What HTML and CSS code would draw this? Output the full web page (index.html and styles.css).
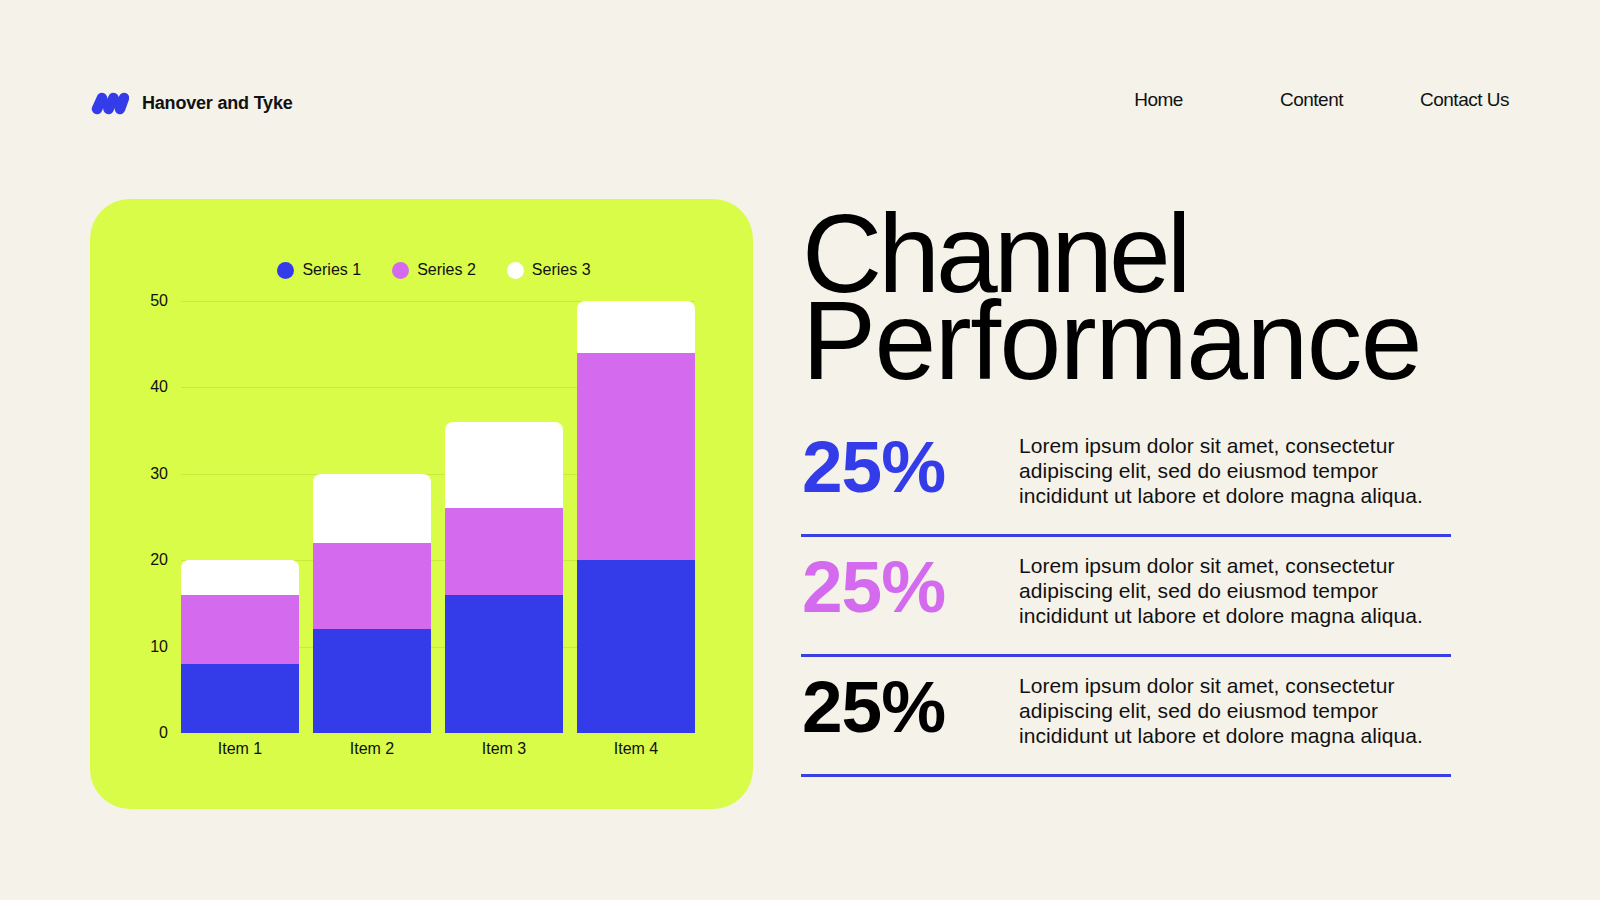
FILE: index.html
```html
<!DOCTYPE html>
<html lang="en">
<head>
<meta charset="utf-8">
<title>Channel Performance</title>
<link rel="stylesheet" href="styles.css">
</head>
<body>
<div class="page">
  <header class="topbar">
    <div class="brand">
      <svg class="brand-mark" viewBox="0 0 38 23" aria-hidden="true">
        <path d="M6 17 L11 6 M17.5 17 L22.5 6 M29 17 L33 6" stroke="#343be9" stroke-width="10.5" stroke-linecap="round" fill="none"/>
      </svg>
      <span class="brand-name">Hanover and Tyke</span>
    </div>
    <nav class="nav">
      <a href="#">Home</a>
      <a href="#">Content</a>
      <a href="#">Contact Us</a>
    </nav>
  </header>

  <main class="main">
    <section class="chart-card">
      <div class="legend">
        <div class="legend-item"><span class="dot dot-s1"></span>Series 1</div>
        <div class="legend-item"><span class="dot dot-s2"></span>Series 2</div>
        <div class="legend-item"><span class="dot dot-s3"></span>Series 3</div>
      </div>
      <div class="chart">
        <div class="yaxis">
          <div class="ytick">50</div>
          <div class="ytick">40</div>
          <div class="ytick">30</div>
          <div class="ytick">20</div>
          <div class="ytick">10</div>
          <div class="ytick">0</div>
        </div>
        <div class="plot">
          <div class="bar" style="height:172.8px">
            <div class="seg seg-s3" style="flex:4"></div>
            <div class="seg seg-s2" style="flex:8"></div>
            <div class="seg seg-s1" style="flex:8"></div>
          </div>
          <div class="bar" style="height:259.2px">
            <div class="seg seg-s3" style="flex:8"></div>
            <div class="seg seg-s2" style="flex:10"></div>
            <div class="seg seg-s1" style="flex:12"></div>
          </div>
          <div class="bar" style="height:311px">
            <div class="seg seg-s3" style="flex:10"></div>
            <div class="seg seg-s2" style="flex:10"></div>
            <div class="seg seg-s1" style="flex:16"></div>
          </div>
          <div class="bar" style="height:432px">
            <div class="seg seg-s3" style="flex:6"></div>
            <div class="seg seg-s2" style="flex:24"></div>
            <div class="seg seg-s1" style="flex:20"></div>
          </div>
        </div>
        <div class="axis-corner"></div>
        <div class="xaxis">
          <div class="xlabel">Item 1</div>
          <div class="xlabel">Item 2</div>
          <div class="xlabel">Item 3</div>
          <div class="xlabel">Item 4</div>
        </div>
      </div>
    </section>

    <section class="summary">
      <h1 class="title"><span class="title-line title-line-1">Channel</span><span class="title-line title-line-2">Performance</span></h1>
      <div class="stats">
        <div class="stat">
          <div class="stat-value value-blue">25%</div>
          <p class="stat-text">Lorem ipsum dolor sit amet, consectetur<br>adipiscing elit, sed do eiusmod tempor<br>incididunt ut labore et dolore magna aliqua.</p>
        </div>
        <div class="stat">
          <div class="stat-value value-pink">25%</div>
          <p class="stat-text">Lorem ipsum dolor sit amet, consectetur<br>adipiscing elit, sed do eiusmod tempor<br>incididunt ut labore et dolore magna aliqua.</p>
        </div>
        <div class="stat">
          <div class="stat-value value-black">25%</div>
          <p class="stat-text">Lorem ipsum dolor sit amet, consectetur<br>adipiscing elit, sed do eiusmod tempor<br>incididunt ut labore et dolore magna aliqua.</p>
        </div>
      </div>
    </section>
  </main>
</div>
</body>
</html>
```

FILE: styles.css
```css
* { box-sizing: border-box; }

body {
  margin: 0;
  background: #f5f2ea;
  font-family: "Liberation Sans", Arial, sans-serif;
  color: #111111;
}

.page {
  width: 1600px;
  height: 900px;
  overflow: hidden;
}

/* Header */
.topbar {
  display: flex;
  justify-content: space-between;
  align-items: center;
  height: 126px;
  padding: 80px 59px 0 91px;
}

.brand {
  display: flex;
  align-items: center;
  gap: 13px;
}

.brand-mark {
  width: 38px;
  height: 23px;
  display: block;
}

.brand-name {
  font-weight: 700;
  font-size: 18px;
  letter-spacing: -0.2px;
  color: #111111;
}

.nav {
  display: grid;
  grid-template-columns: repeat(3, 153px);
  padding-bottom: 6px;
}

.nav a {
  text-align: center;
  font-size: 19px;
  letter-spacing: -0.5px;
  color: #111111;
  text-decoration: none;
}

/* Main */
.main {
  display: flex;
  gap: 48px;
  padding: 73px 0 0 90px;
}

.chart-card {
  width: 663px;
  height: 610px;
  flex: none;
  background: #d8fc48;
  border-radius: 40px;
  padding: 62px 58px 0 50px;
}

.legend {
  display: flex;
  justify-content: center;
  gap: 31px;
  height: 18px;
  margin-left: 41px;
  padding-right: 8px;
}

.legend-item {
  display: flex;
  align-items: center;
  gap: 8px;
  font-size: 16px;
  line-height: 18px;
  color: #111111;
}

.dot {
  width: 17px;
  height: 17px;
  border-radius: 50%;
  flex: none;
}

.dot-s1 { background: #343be9; }
.dot-s2 { background: #d46bee; }
.dot-s3 { background: #ffffff; }

.chart {
  display: grid;
  grid-template-columns: 28px 514px;
  column-gap: 13px;
  margin-top: 22px;
}

.yaxis {
  height: 432px;
  display: flex;
  flex-direction: column;
  justify-content: space-between;
  align-items: flex-end;
}

.ytick {
  height: 0;
  display: flex;
  align-items: center;
  font-size: 16px;
  line-height: 18px;
  color: #111111;
}

.plot {
  height: 432px;
  display: flex;
  align-items: flex-end;
  gap: 14px;
  background: repeating-linear-gradient(to bottom, #c9e93f 0, #c9e93f 1px, transparent 1px, transparent 86.4px);
}

.bar {
  flex: 1;
  display: flex;
  flex-direction: column;
  border-radius: 8px 8px 0 0;
  overflow: hidden;
}

.seg { min-height: 0; }
.seg-s1 { background: #343be9; }
.seg-s2 { background: #d46bee; }
.seg-s3 { background: #ffffff; }

.xaxis {
  display: flex;
  gap: 14px;
  padding-top: 7px;
}

.xlabel {
  flex: 1;
  text-align: center;
  font-size: 16px;
  line-height: 18px;
  color: #111111;
}

/* Summary */
.summary {
  width: 650px;
  padding-top: 12px;
}

.title {
  margin: 0 0 0 1px;
  font-size: 111px;
  line-height: 87px;
  font-weight: 400;
  color: #000000;
}

.title-line {
  display: block;
}

.title-line-1 {
  letter-spacing: -4px;
}

.title-line-2 {
  letter-spacing: -1.5px;
}

.stats {
  margin-top: 32px;
}

.stat {
  display: flex;
  height: 120px;
  padding-top: 16px;
  border-bottom: 3px solid #3a40e4;
}

.stat-value {
  width: 218px;
  flex: none;
  margin-top: -3px;
  padding-left: 1px;
  font-weight: 700;
  font-size: 73px;
  line-height: 74px;
  letter-spacing: -1px;
}

.value-blue { color: #343be9; }
.value-pink { color: #d46bee; }
.value-black { color: #000000; }

.stat-text {
  margin: 0;
  font-size: 21px;
  line-height: 25px;
  letter-spacing: 0.05px;
  white-space: nowrap;
  color: #111111;
}
```
